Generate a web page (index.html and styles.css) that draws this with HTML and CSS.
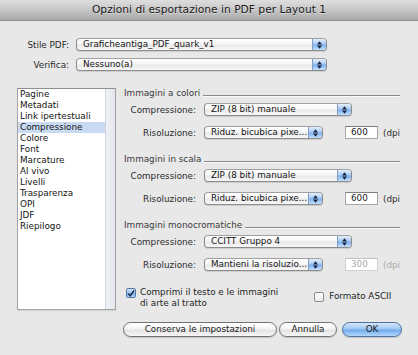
FILE: index.html
```html
<!DOCTYPE html>
<html lang="it">
<head>
<meta charset="utf-8">
<title>Opzioni di esportazione in PDF per Layout 1</title>
<link rel="stylesheet" href="styles.css">
</head>
<body>
<div class="win">
  <div class="titlebar">Opzioni di esportazione in PDF per Layout 1</div>

  <div class="top">
    <div class="frow">
      <span class="flabel">Stile PDF:</span>
      <div class="select sel-wide"><span class="val">Graficheantiga_PDF_quark_v1</span><span class="cap"><svg width="5" height="8" viewBox="0 0 5 8"><polygon points="0,3.4 2.5,0.2 5,3.4"/><polygon points="0,4.6 2.5,7.8 5,4.6"/></svg></span></div>
    </div>
    <div class="frow">
      <span class="flabel">Verifica:</span>
      <div class="select sel-wide"><span class="val">Nessuno(a)</span><span class="cap"><svg width="5" height="8" viewBox="0 0 5 8"><polygon points="0,3.4 2.5,0.2 5,3.4"/><polygon points="0,4.6 2.5,7.8 5,4.6"/></svg></span></div>
    </div>
  </div>

  <div class="main">
    <div class="list">
      <ul class="items">
        <li>Pagine</li>
        <li>Metadati</li>
        <li>Link ipertestuali</li>
        <li class="sel">Compressione</li>
        <li>Colore</li>
        <li>Font</li>
        <li>Marcature</li>
        <li>Al vivo</li>
        <li>Livelli</li>
        <li>Trasparenza</li>
        <li>OPI</li>
        <li>JDF</li>
        <li>Riepilogo</li>
      </ul>
      <div class="track"></div>
    </div>

    <div class="panel">
      <section class="group">
        <div class="ghead"><span>Immagini a colori</span><span class="rule"></span></div>
        <div class="row">
          <span class="rlabel">Compressione:</span>
          <div class="select sel-comp"><span class="val">ZIP (8 bit) manuale</span><span class="cap"><svg width="5" height="8" viewBox="0 0 5 8"><polygon points="0,3.4 2.5,0.2 5,3.4"/><polygon points="0,4.6 2.5,7.8 5,4.6"/></svg></span></div>
        </div>
        <div class="row">
          <span class="rlabel">Risoluzione:</span>
          <div class="select sel-res"><span class="val">Riduz. bicubica pixe...</span><span class="cap"><svg width="5" height="8" viewBox="0 0 5 8"><polygon points="0,3.4 2.5,0.2 5,3.4"/><polygon points="0,4.6 2.5,7.8 5,4.6"/></svg></span></div>
          <span class="num">600</span><span class="unit">(dpi</span>
        </div>
      </section>

      <section class="group">
        <div class="ghead"><span>Immagini in scala</span><span class="rule"></span></div>
        <div class="row">
          <span class="rlabel">Compressione:</span>
          <div class="select sel-comp"><span class="val">ZIP (8 bit) manuale</span><span class="cap"><svg width="5" height="8" viewBox="0 0 5 8"><polygon points="0,3.4 2.5,0.2 5,3.4"/><polygon points="0,4.6 2.5,7.8 5,4.6"/></svg></span></div>
        </div>
        <div class="row">
          <span class="rlabel">Risoluzione:</span>
          <div class="select sel-res"><span class="val">Riduz. bicubica pixe...</span><span class="cap"><svg width="5" height="8" viewBox="0 0 5 8"><polygon points="0,3.4 2.5,0.2 5,3.4"/><polygon points="0,4.6 2.5,7.8 5,4.6"/></svg></span></div>
          <span class="num">600</span><span class="unit">(dpi</span>
        </div>
      </section>

      <section class="group">
        <div class="ghead"><span>Immagini monocromatiche</span><span class="rule"></span></div>
        <div class="row">
          <span class="rlabel">Compressione:</span>
          <div class="select sel-comp"><span class="val">CCITT Gruppo 4</span><span class="cap"><svg width="5" height="8" viewBox="0 0 5 8"><polygon points="0,3.4 2.5,0.2 5,3.4"/><polygon points="0,4.6 2.5,7.8 5,4.6"/></svg></span></div>
        </div>
        <div class="row">
          <span class="rlabel">Risoluzione:</span>
          <div class="select sel-res"><span class="val">Mantieni la risoluzio...</span><span class="cap"><svg width="5" height="8" viewBox="0 0 5 8"><polygon points="0,3.4 2.5,0.2 5,3.4"/><polygon points="0,4.6 2.5,7.8 5,4.6"/></svg></span></div>
          <span class="num disabled">300</span><span class="unit disabled">(dpi</span>
        </div>
      </section>

      <div class="checks">
        <div class="check">
          <span class="box on"><svg width="9" height="9" viewBox="0 0 9 9"><path d="M1.5 4.6 L3.6 7.2 L8 1" fill="none" stroke="#10203c" stroke-width="1.6"/></svg></span>
          <span class="ctext">Comprimi il testo e le immagini<br>di arte al tratto</span>
        </div>
        <div class="check ascii">
          <span class="box"></span>
          <span class="ctext">Formato ASCII</span>
        </div>
      </div>
    </div>
  </div>

  <div class="buttons">
    <button class="btn btn-keep">Conserva le impostazioni</button>
    <button class="btn btn-cancel">Annulla</button>
    <button class="btn btn-ok">OK</button>
  </div>
</div>
</body>
</html>
```

FILE: styles.css
```css
* { box-sizing: border-box; }

html, body {
  margin: 0;
  padding: 0;
}

body {
  width: 418px;
  height: 355px;
  overflow: hidden;
  background: #e8e8e8;
  font-family: "DejaVu Sans", Verdana, sans-serif;
  font-size: 8.8px;
  color: #1c1c1c;
}

.win {
  width: 418px;
  height: 355px;
  background: #e8e8e8;
}

.titlebar {
  height: 21px;
  line-height: 20px;
  text-align: center;
  font-size: 10.7px;
  color: #1a1a1a;
  background: linear-gradient(#dedede, #c6c6c6 50%, #a9a9a9);
  border-bottom: 1px solid #8e8e8e;
  text-shadow: 0 1px 0 rgba(255,255,255,0.45);
}

/* top form */
.top {
  padding-top: 17px;
  display: flex;
  flex-direction: column;
  gap: 7px;
}

.frow {
  display: flex;
  align-items: center;
  height: 13px;
}

.flabel {
  width: 69px;
  text-align: right;
  margin-right: 7px;
  color: #2a2a2a;
  white-space: nowrap;
}

/* select */
.select {
  display: flex;
  height: 13px;
  border: 1px solid #8c8c8c;
  border-top-color: #a0a0a0;
  border-radius: 4px;
  background: linear-gradient(#ffffff, #f6f6f6 45%, #e9e9e9 55%, #f7f7f7);
  overflow: hidden;
  box-shadow: 0 1px 1px rgba(0,0,0,0.12);
}

.sel-wide { width: 251px; }
.sel-comp { width: 148px; }
.sel-res { width: 119px; }

.val {
  flex: 1;
  padding-left: 6px;
  line-height: 11px;
  white-space: nowrap;
  overflow: hidden;
  color: #151515;
}

.cap {
  width: 14px;
  flex: none;
  border-left: 1px solid #7f9cc6;
  background: linear-gradient(#e3effc, #a9cbf3 45%, #7fb0ee 55%, #c4e1fd);
  display: flex;
  align-items: center;
  justify-content: center;
}

.cap svg polygon { fill: #1b2740; }

/* main area */
.main {
  margin-top: 17px;
  padding-left: 17px;
  display: flex;
  align-items: flex-start;
}

.list {
  width: 99px;
  height: 222px;
  border: 1px solid #a3a3a3;
  border-top-color: #8f8f8f;
  background: #ffffff;
  display: flex;
  box-shadow: 0 1px 1px rgba(0,0,0,0.08);
}

.items {
  list-style: none;
  margin: 0;
  padding: 0;
  flex: 1;
}

.items li {
  height: 11px;
  line-height: 11px;
  padding-left: 2px;
  color: #151515;
  white-space: nowrap;
}

.items li.sel {
  background: #c9dbf2;
}

.track {
  width: 10px;
  flex: none;
  border-left: 1px solid #d2d6dc;
  background: linear-gradient(90deg, #eef1f5, #e3e7ec);
}

.panel {
  margin-left: 8px;
  width: 276px;
  overflow: hidden;
  display: flex;
  flex-direction: column;
}

.group {
  display: flex;
  flex-direction: column;
  margin-bottom: 15px;
}

.ghead {
  display: flex;
  height: 11px;
  line-height: 11px;
  color: #3a3a3a;
  margin-bottom: 4px;
}

.ghead span:first-child { white-space: nowrap; }

.rule {
  flex: 1;
  height: 2px;
  margin-top: 7px;
  margin-left: 3px;
  border-top: 1px solid #8a8a8a;
  border-bottom: 1px solid #fafafa;
}

.row {
  display: flex;
  align-items: center;
  height: 13px;
}

.row + .row { margin-top: 10px; }

.rlabel {
  width: 72px;
  text-align: right;
  margin-right: 8px;
  color: #2c2c2c;
  white-space: nowrap;
}

.num {
  margin-left: 22px;
  width: 33px;
  height: 13px;
  line-height: 11px;
  padding-left: 5px;
  background: #ffffff;
  border: 1px solid #a6a6a6;
  border-top-color: #7d7d7d;
  color: #1c1c1c;
}

.unit {
  margin-left: 5px;
  color: #2c2c2c;
  white-space: nowrap;
}

.num.disabled {
  color: #a9a9a9;
  border-color: #cfcfcf;
  border-top-color: #c0c0c0;
}

.unit.disabled { color: #a9a9a9; }

/* checkboxes */
.checks {
  display: flex;
  align-items: flex-start;
  margin-top: 1px;
}

.check {
  display: flex;
  align-items: flex-start;
}

.check .box {
  width: 10px;
  height: 10px;
  flex: none;
  margin-left: 2px;
  margin-right: 4px;
  border: 1px solid #8a8a8a;
  border-radius: 2px;
  background: linear-gradient(#ffffff, #ececec);
  display: flex;
  align-items: center;
  justify-content: center;
}

.check .box.on {
  margin-top: 1px;
  border-color: #5a77a6;
  background: linear-gradient(#d4e6fb, #94c0f1 50%, #6ea7ea 51%, #b7dafd);
}

.ctext {
  line-height: 11px;
  color: #1e1e1e;
}

.ascii {
  margin-left: 34px;
  margin-top: 4px;
  align-items: center;
}

.ascii .box {
  margin-right: 5px;
}

/* buttons */
.buttons {
  margin-top: 12px;
  padding-right: 16px;
  display: flex;
  justify-content: flex-end;
}

.btn {
  height: 15px;
  padding: 0;
  border: 1px solid #717171;
  border-radius: 8px;
  background: linear-gradient(#ffffff, #f4f4f4 45%, #e2e2e2 55%, #f7f7f7);
  font-family: "DejaVu Sans", Verdana, sans-serif;
  font-size: 8.8px;
  line-height: 13px;
  color: #1a1a1a;
  text-align: center;
  box-shadow: 0 1px 1px rgba(0,0,0,0.15);
}

.btn-keep { width: 154px; }
.btn-cancel { width: 58px; margin-left: 2px; }
.btn-ok {
  width: 60px;
  margin-left: 5px;
  border-color: #4f6f9f;
  background: linear-gradient(#d6e8fc, #9ec7f3 45%, #71abed 55%, #b2d8fd);
}
```
